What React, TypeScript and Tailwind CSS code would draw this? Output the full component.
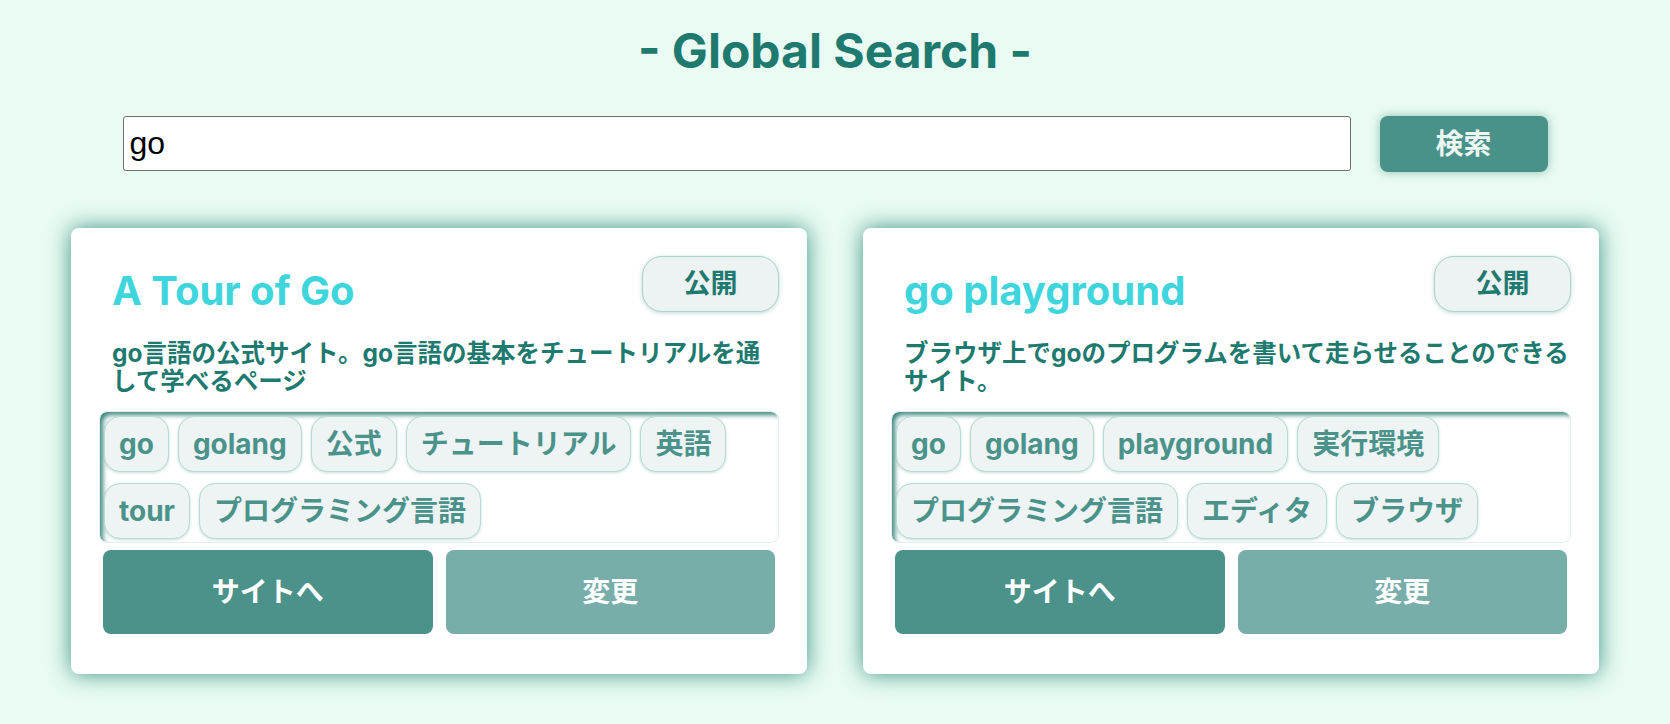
const sites = [
  {
    title: "A Tour of Go",
    desc: "go言語の公式サイト。go言語の基本をチュートリアルを通\nして学べるページ",
    tags: ["go", "golang", "公式", "チュートリアル", "英語", "tour", "プログラミング言語"],
  },
  {
    title: "go playground",
    desc: "ブラウザ上でgoのプログラムを書いて走らせることのできる\nサイト。",
    tags: ["go", "golang", "playground", "実行環境", "プログラミング言語", "エディタ", "ブラウザ"],
  },
];

function SiteCard({ site }: { site: (typeof sites)[number] }) {
  return (
    <div className="w-[736px] bg-white rounded-[8px] px-[28px] pt-[28px] pb-[40px] shadow-[0_0_22px_rgba(40,135,120,0.9)]">
      <div className="flex justify-between items-start">
        <h2 className="ml-[13px] mt-[11px] text-[40px] leading-[48px] font-bold text-[#3ed5dd]">
          {site.title}
        </h2>
        <button className="w-[137px] h-[56px] rounded-[20px] bg-[#edf2f2] border border-[#a9d3cb] shadow-[0_1px_4px_rgba(74,146,138,0.35)] text-[27px] font-bold text-[#1e7a6f]">
          公開
        </button>
      </div>

      <p className="ml-[13px] mt-[24px] text-[24.5px] leading-[28px] font-bold text-[#1e7a6f] whitespace-pre-line">
        {site.desc}
      </p>

      <div className="mt-[16px] h-[132px] rounded-[8px] border border-[#e6efee] shadow-[inset_4px_4px_5px_-1px_rgba(50,130,120,0.95)] p-[4px] flex flex-wrap content-start gap-x-[9px] gap-y-[11px]">
        {site.tags.map((tag) => (
          <span
            key={tag}
            className="h-[56px] flex items-center px-[14px] rounded-[16px] bg-[#eef4f4] border border-[#b5dbd3] shadow-[0_1px_3px_rgba(74,146,138,0.3)] text-[28px] font-bold text-[#4a928a]"
          >
            {tag}
          </span>
        ))}
      </div>

      <div className="mt-[7px] mx-[4px] grid grid-cols-2 gap-[13px]">
        <button className="h-[84px] rounded-[8px] bg-[#4a928a] text-white text-[28px] font-bold">
          サイトへ
        </button>
        <button className="h-[84px] rounded-[8px] bg-[#78aea9] text-white text-[28px] font-bold">
          変更
        </button>
      </div>
    </div>
  );
}

export default function App() {
  return (
    <div className="min-h-[724px] bg-[#e9fbf2] font-['Inter','Noto_Sans_CJK_JP',sans-serif] pb-[50px]">
      <h1 className="pt-[22px] text-center text-[48px] leading-[58px] font-bold text-[#1e7a6f]">
        - Global Search -
      </h1>

      <div className="mt-[36px] flex justify-center gap-[29px]">
        <input
          defaultValue="go"
          className="w-[1228px] h-[55px] bg-white border border-[#6f6f6f] rounded-[3px] px-[6px] text-[32px] text-black font-['Liberation_Sans',sans-serif] outline-none"
        />
        <button className="w-[168px] h-[56px] rounded-[8px] bg-[#48928a] text-[#eef6f2] text-[28px] font-bold shadow-[0_0_10px_rgba(72,146,138,0.55)]">
          検索
        </button>
      </div>

      <div className="mt-[56px] flex justify-center gap-[56px]">
        {sites.map((site) => (
          <SiteCard key={site.title} site={site} />
        ))}
      </div>
    </div>
  );
}
